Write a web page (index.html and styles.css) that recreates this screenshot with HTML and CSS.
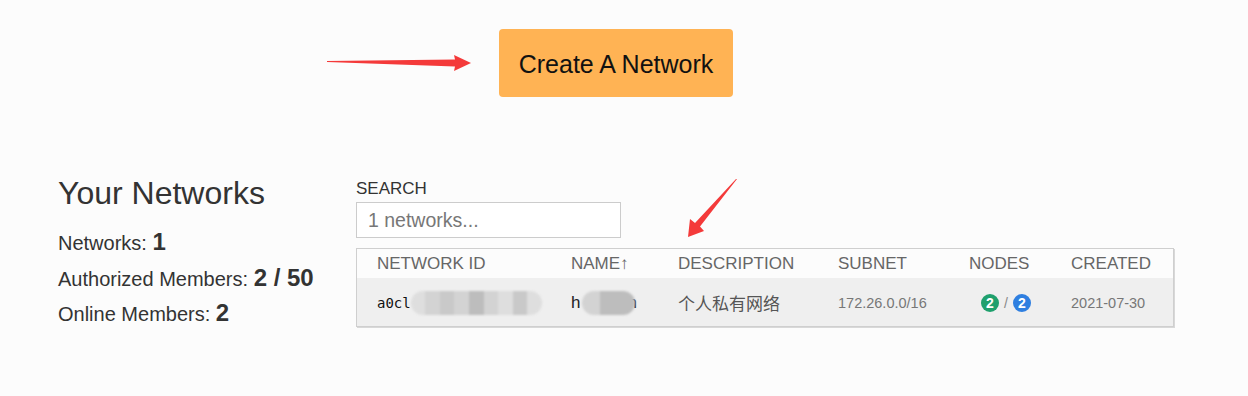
FILE: index.html
```html
<!DOCTYPE html>
<html>
<head>
<meta charset="utf-8">
<link rel="stylesheet" href="styles.css">
</head>
<body>
<div class="page">
  <div class="top">
    <button class="create-btn">Create A Network</button>
  </div>
  <div class="main">
    <div class="summary">
      <h1 class="title">Your Networks</h1>
      <p class="stat">Networks: <b>1</b></p>
      <p class="stat">Authorized Members: <b>2 / 50</b></p>
      <p class="stat">Online Members: <b>2</b></p>
    </div>
    <div class="list">
      <label class="search-label">SEARCH</label>
      <div class="search-box"><span class="placeholder">1 networks...</span></div>
      <div class="table">
        <div class="row head">
          <div class="cell">NETWORK ID</div>
          <div class="cell">NAME↑</div>
          <div class="cell">DESCRIPTION</div>
          <div class="cell">SUBNET</div>
          <div class="cell">NODES</div>
          <div class="cell">CREATED</div>
        </div>
        <div class="row body">
          <div class="cell id"><span class="mono">a0cl</span><span class="blur blur-id"><i class="c0"></i><i class="c1"></i><i class="c2"></i><i class="c1"></i><i class="c3"></i><i class="c1"></i><i class="c0"></i><i class="c2"></i><i class="c0"></i></span></div>
          <div class="cell name"><span>h</span><span class="blur blur-name"><i class="c1"></i><i class="c3"></i><i class="c3"></i></span><span class="tail">n</span></div>
          <div class="cell desc">个人私有网络</div>
          <div class="cell small">172.26.0.0/16</div>
          <div class="cell nodes"><span class="badge green">2</span><span class="slash">/</span><span class="badge blue">2</span></div>
          <div class="cell small">2021-07-30</div>
        </div>
      </div>
    </div>
  </div>
  <svg class="arrow arrow-1" width="160" height="24" viewBox="320 50 160 24">
    <polygon points="327,61 455,59.5 454,55 471,63 454,71 455,66.5 327,62" fill="#f43a3a"/>
  </svg>
  <svg class="arrow arrow-2" width="60" height="70" viewBox="684 174 60 70">
    <polygon points="737,179 700,226.5 704,231 688,237 690,219 695,223 736,179" fill="#f43a3a"/>
  </svg>
</div>
</body>
</html>
```

FILE: styles.css
```css
html, body {
  margin: 0;
  padding: 0;
  background: #fcfcfc;
}
body {
  font-family: "Liberation Sans", Arial, sans-serif;
  color: #333;
  width: 1248px;
  height: 396px;
  overflow: hidden;
}
.page {
  position: relative;
  height: 396px;
}
.top {
  display: flex;
  padding: 29px 0 0 499px;
}
.create-btn {
  width: 234px;
  height: 68px;
  border: none;
  border-radius: 4px;
  background: #ffb354;
  color: #111;
  font-family: "Liberation Sans", Arial, sans-serif;
  font-size: 25px;
  line-height: 30px;
  padding: 2px 0 0;
  cursor: pointer;
}
.main {
  display: flex;
  padding: 78px 0 0 58px;
}
.summary {
  width: 298px;
}
.title {
  margin: 0 0 14px;
  font-size: 32px;
  line-height: 36px;
  font-weight: normal;
  color: #333;
}
.stat {
  margin: 0;
  font-size: 20px;
  line-height: 34.5px;
  color: #333;
}
.stat b {
  font-size: 24px;
}
.list {
  width: 818px;
  display: flex;
  flex-direction: column;
}
.search-label {
  font-size: 17px;
  line-height: 20px;
  margin-top: 4px;
  color: #333;
}
.search-box {
  margin-top: 3px;
  height: 34px;
  border: 1px solid #ccc;
  background: #fff;
  display: flex;
  align-items: center;
  padding-left: 11px;
  box-sizing: content-box;
  width: 252px;
}
.placeholder {
  font-size: 19.5px;
  color: #777;
}
.table {
  margin-top: 10px;
  border: 1px solid #cfcfcf;
  box-shadow: 1px 1px 0 #d8d8d8;
}
.row {
  display: grid;
  grid-template-columns: 194px 107px 160px 131px 102px 1fr;
  align-items: center;
}
.row.head {
  height: 28px;
  background: #fcfcfc;
  padding-top: 1px;
}
.row.body {
  height: 47px;
  background: #efefef;
  padding-top: 1px;
}
.cell {
  padding-left: 20px;
  white-space: nowrap;
  display: flex;
  align-items: center;
}
.head .cell {
  font-size: 17px;
  color: #666;
}
.mono {
  font-family: "DejaVu Sans Mono", "Liberation Mono", monospace;
  font-size: 14px;
  color: #111;
}
.name {
  font-size: 17px;
  color: #222;
}
.name .tail {
  margin-left: -8px;
}
.desc {
  font-family: "Noto Sans CJK SC", "Liberation Sans", sans-serif;
  font-size: 17px;
  color: #555;
}
.small {
  font-size: 14.5px;
  color: #777;
}
.blur {
  display: inline-flex;
  height: 24px;
  border-radius: 12px;
  overflow: hidden;
  filter: blur(1px);
  position: relative;
  z-index: 1;
}
.blur i {
  flex: 1;
  display: block;
}
.blur-id {
  width: 131px;
  margin-left: 0;
}
.blur-name {
  width: 53px;
  margin: 0 0 0 2px;
}
.c0 { background: #dedede; }
.c1 { background: #d3d3d3; }
.c2 { background: #c9c9c9; }
.c3 { background: #bdbdbd; }
.nodes {
  padding-left: 32px;
}
.badge {
  width: 18px;
  height: 18px;
  border-radius: 50%;
  color: #fff;
  font-size: 14px;
  font-weight: bold;
  display: inline-flex;
  align-items: center;
  justify-content: center;
}
.green { background: #1fa06d; }
.blue { background: #2f7fe0; }
.slash {
  font-size: 14px;
  color: #888;
  margin: 0 5px;
}
.arrow {
  position: absolute;
}
.arrow-1 {
  left: 320px;
  top: 50px;
}
.arrow-2 {
  left: 684px;
  top: 174px;
}
```
